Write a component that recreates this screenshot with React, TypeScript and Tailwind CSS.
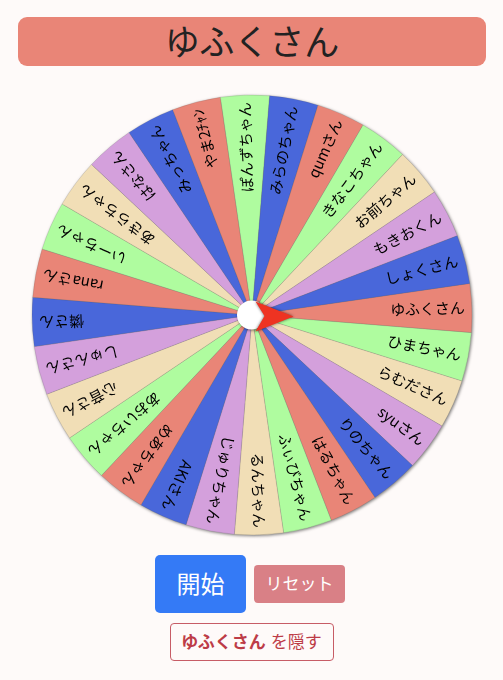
import React from 'react'

interface Slice {
  name: string;
  color: string;
}

const RED = '#e98577'
const GREEN = '#affc9f'
const WHEAT = '#f1deb6'
const PLUM = '#d4a0dc'
const BLUE = '#4967da'

const slices: Slice[] = [
  { name: 'ゆふくさん', color: RED },
  { name: 'ひまちゃん', color: GREEN },
  { name: 'らむださん', color: WHEAT },
  { name: 'syuさん', color: PLUM },
  { name: 'りのちゃん', color: BLUE },
  { name: 'はるちゃん', color: RED },
  { name: 'ふぃびちゃん', color: GREEN },
  { name: 'るんちゃん', color: WHEAT },
  { name: 'じゅりちゃん', color: PLUM },
  { name: 'AKIさん', color: BLUE },
  { name: 'めあちゃん', color: RED },
  { name: 'あおいちゃん', color: GREEN },
  { name: '心音さん', color: WHEAT },
  { name: 'しゅんさん', color: PLUM },
  { name: '憐さん', color: BLUE },
  { name: 'ranaさん', color: RED },
  { name: 'いーちゃん', color: GREEN },
  { name: 'あきらちゃん', color: WHEAT },
  { name: 'はなさん', color: PLUM },
  { name: 'みっちゃん', color: BLUE },
  { name: 'やま2ﾁｬﾝ', color: RED },
  { name: 'ぽんずちゃん', color: GREEN },
  { name: 'みらのちゃん', color: BLUE },
  { name: 'qumさん', color: RED },
  { name: 'きなこちゃん', color: GREEN },
  { name: 'お前ちゃん', color: WHEAT },
  { name: 'もきおくん', color: PLUM },
  { name: 'しょくさん', color: BLUE },
]

const RADIUS = 220
const STEP = 360 / slices.length
// angle where the first slice begins
const START = 4.6 - STEP

const point = (deg: number) => {
  const rad = (deg * Math.PI) / 180
  return `${(RADIUS * Math.cos(rad)).toFixed(2)} ${(RADIUS * Math.sin(rad)).toFixed(2)}`
}

const Wheel = () => (
  <svg
    width="456"
    height="456"
    viewBox="-228 -228 456 456"
    className="block shrink-0 drop-shadow-[1px_1px_1.5px_rgba(0,0,0,0.5)]"
  >
    {slices.map((slice, i) => {
      const from = START + i * STEP
      return (
        <path
          key={slice.name}
          d={`M0 0L${point(from)}A${RADIUS} ${RADIUS} 0 0 1 ${point(from + STEP)}Z`}
          fill={slice.color}
          stroke="#555"
          strokeOpacity="0.4"
          strokeWidth="0.4"
        />
      )
    })}
    {slices.map((slice, i) => (
      <text
        key={slice.name}
        x="213"
        y="5"
        textAnchor="end"
        transform={`rotate(${START + (i + 0.5) * STEP})`}
        className="fill-black text-[15px]"
      >
        {slice.name}
      </text>
    ))}
    <g className="drop-shadow-[1px_1px_1.5px_rgba(0,0,0,0.5)]">
      <circle cx="-0.5" cy="0" r="14.5" fill="#fff" />
    </g>
    <path
      d="M3.5 -13.5L41.5 1.5L3.5 16.5L12.5 1Z"
      fill="#ee3322"
      className="drop-shadow-[0_0_1.5px_rgba(0,0,0,0.6)]"
    />
  </svg>
)

export default function App() {
  return (
    <div className="flex h-[680px] w-[503px] flex-col items-center overflow-hidden bg-[#fefaf9] pt-[17px] font-['Noto_Sans_CJK_JP','Noto_Sans',sans-serif]">
      <h1 className="ml-px flex h-[49px] w-[468px] items-center justify-center rounded-[9px] bg-[#e98577] pb-1 text-[35px] leading-none text-[#222]">
        ゆふくさん
      </h1>
      <div className="mt-[21px] flex justify-center pl-px">
        <Wheel />
      </div>
      <div className="mt-3 flex items-center gap-2 pr-[3px]">
        <button className="flex h-[58px] w-[91px] items-center justify-center rounded-[5px] bg-[#347af6] pb-[3px] text-2xl leading-none text-white">
          開始
        </button>
        <button className="flex h-[38px] w-[91px] items-center justify-center rounded bg-[#d98086] pb-[3px] text-[17px] leading-none text-white">
          リセット
        </button>
      </div>
      <button className="mt-2.5 flex h-[38px] w-[164px] items-center justify-center gap-[5px] rounded border border-[#c75c66] pb-[3px] text-[17px] leading-none text-[#bd3c47]">
        <b className="font-bold">ゆふくさん</b>
        <span>を隠す</span>
      </button>
    </div>
  )
}
